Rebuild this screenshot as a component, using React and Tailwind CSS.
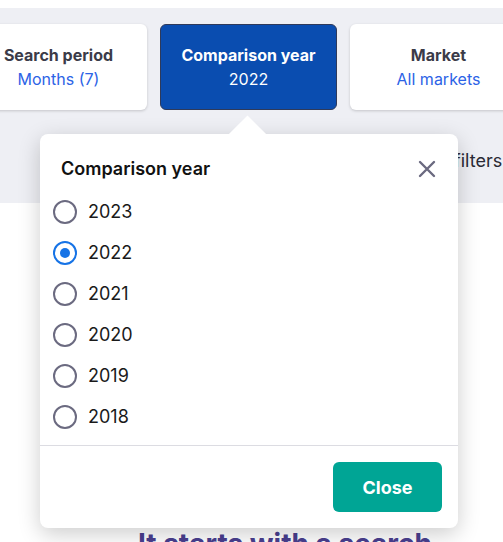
import { useState } from 'react'

const years = ['2023', '2022', '2021', '2020', '2019', '2018']

// Radio circle drawn with borders, blue ring + dot when selected
function Radio({ checked }) {
  return checked ? (
    <span className="flex items-center justify-center w-[24px] h-[24px] rounded-full border-[2.5px] border-[#1673e6]">
      <span className="w-[10px] h-[10px] rounded-full bg-[#1673e6]" />
    </span>
  ) : (
    <span className="w-[24px] h-[24px] rounded-full border-[2.5px] border-[#6b6a80]" />
  )
}

function FilterCard({ title, value, active }) {
  return (
    <div
      className={
        active
          ? 'flex flex-col items-center justify-center w-[177px] h-[86px] shrink-0 rounded-md bg-[#0a4db0] border border-[#2f3a5a] text-white'
          : 'flex flex-col items-center justify-center w-[177px] h-[86px] shrink-0 rounded-md bg-white shadow-[0_1px_3px_rgba(0,0,0,0.18)]'
      }
    >
      <span className={active ? 'text-[16px] font-bold leading-6' : 'text-[16px] font-bold leading-6 text-[#3b3b48]'}>
        {title}
      </span>
      <span className={active ? 'text-[16px] leading-6' : 'text-[16px] leading-6 text-[#2c63e6]'}>{value}</span>
    </div>
  )
}

export default function App() {
  const [year, setYear] = useState('2022')

  return (
    <div className="relative w-[503px] h-[542px] overflow-hidden bg-white font-['Inter',sans-serif]">
      {/* Filter band */}
      <div className="mt-2 h-[195px] bg-[#eeeff4] pt-4">
        <div className="flex gap-[13px] ml-[-30px]">
          <FilterCard title="Search period" value="Months (7)" />
          <FilterCard title="Comparison year" value={year} active />
          <FilterCard title="Market" value="All markets" />
        </div>
        <div className="pl-[405px] mt-[37px] whitespace-nowrap text-[18px] text-[#2a2a35]">More filters</div>
      </div>

      <h2 className="pl-[138px] pt-[320px] text-[28px] font-bold text-[#4a3f90] whitespace-nowrap">
        It starts with a search
      </h2>

      {/* Comparison year popover */}
      <div className="absolute left-[40px] top-[134px] w-[418px] rounded-lg bg-white shadow-[0_6px_22px_rgba(0,0,0,0.2)]">
        <div className="absolute -top-[13px] left-[194px] w-[27px] h-[27px] rotate-45 bg-white" />
        <div className="relative flex items-center justify-between pl-[21px] pr-[22px] pt-[23px] pb-[10px]">
          <span className="text-[18px] font-semibold leading-6 text-[#111]">Comparison year</span>
          <svg width="18" height="18" viewBox="0 0 18 18" fill="none" stroke="#6b6a80" strokeWidth="2.4" strokeLinecap="round">
            <path d="M2 2L16 16M16 2L2 16" />
          </svg>
        </div>
        <div className="relative pl-[13px] pb-2">
          {years.map((y) => (
            <label
              key={y}
              onClick={() => setYear(y)}
              className="flex items-center gap-[11px] h-[41px] cursor-pointer text-[18px] text-[#1a1a1a]"
            >
              <Radio checked={year === y} />
              <span>{y}</span>
            </label>
          ))}
        </div>
        <div className="border-t border-[#dcdce2] flex justify-end p-4">
          <button className="w-[109px] h-[50px] rounded-md bg-[#00a595] text-white text-[18px] font-bold">Close</button>
        </div>
      </div>
    </div>
  )
}
